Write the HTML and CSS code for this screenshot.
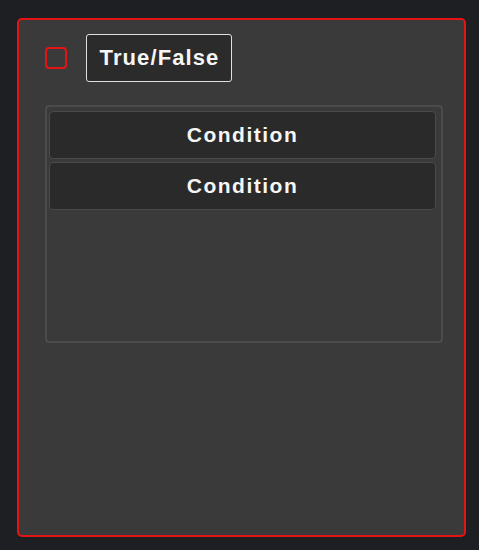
FILE: index.html
```html
<!DOCTYPE html>
<html>
<head>
<meta charset="utf-8">
<link rel="stylesheet" href="styles.css">
</head>
<body>
<div class="panel">
  <div class="header">
    <div class="checkbox"></div>
    <div class="tf">True/False</div>
  </div>
  <div class="conditions">
    <div class="cond">Condition</div>
    <div class="cond">Condition</div>
  </div>
</div>
</body>
</html>
```
FILE: styles.css
```css
html, body {
  margin: 0;
  padding: 0;
  background: #1e1f22;
}
body {
  padding: 18px 0 0 17px;
  font-family: "Liberation Sans", Arial, sans-serif;
}
.panel {
  box-sizing: border-box;
  width: 449px;
  height: 519px;
  border: 2px solid #e41414;
  border-radius: 5px;
  background: #3a3a3a;
  padding: 14px 0 0 26px;
}
.header {
  display: flex;
  align-items: center;
  height: 48px;
}
.checkbox {
  box-sizing: border-box;
  width: 22px;
  height: 22px;
  border: 2px solid #e41414;
  border-radius: 4px;
}
.tf {
  box-sizing: border-box;
  margin-left: 19px;
  width: 146px;
  height: 48px;
  border: 1px solid #e0e0e0;
  border-radius: 3px;
  background: #2b2b2b;
  color: #f6f6f6;
  font-weight: bold;
  font-size: 22px;
  letter-spacing: 1.1px;
  padding-left: 1px;
  display: flex;
  align-items: center;
  justify-content: center;
}
.conditions {
  box-sizing: border-box;
  margin-top: 23px;
  width: 398px;
  height: 238px;
  border: 2px solid #4b4b4b;
  border-radius: 4px;
  padding: 4px 5px 0 2px;
  display: flex;
  flex-direction: column;
  gap: 3px;
}
.cond {
  box-sizing: border-box;
  height: 48px;
  border: 1px solid #4a4a4a;
  border-radius: 4px;
  background: #2a2a2a;
  color: #f6f6f6;
  font-weight: bold;
  font-size: 21px;
  letter-spacing: 1.5px;
  display: flex;
  align-items: center;
  justify-content: center;
}
```
